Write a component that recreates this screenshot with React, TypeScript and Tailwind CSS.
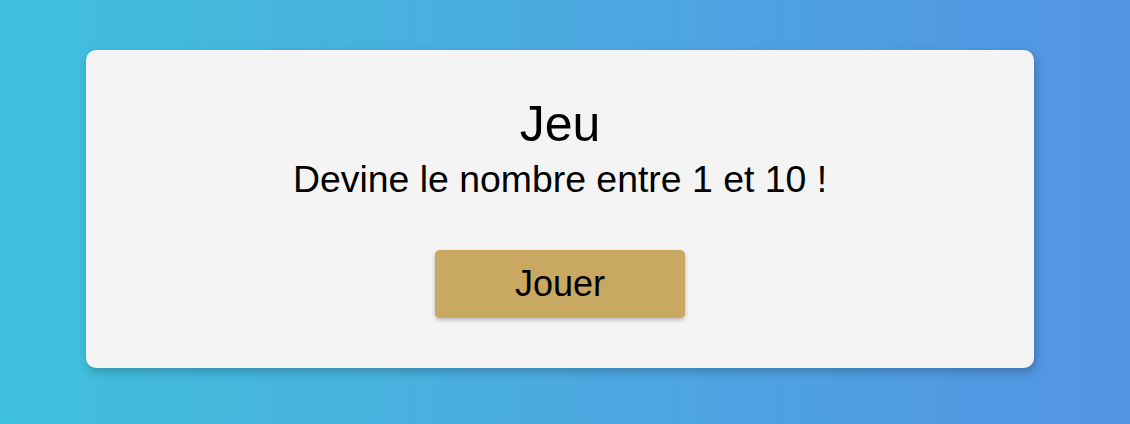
import React from 'react';

const App: React.FC = () => {
  return (
    <div className="w-[1130px] h-[424px] overflow-hidden bg-gradient-to-r from-[#3fc0dc] to-[#5393e3] pt-[50px] pl-[86px] font-['Liberation_Sans',Arial,sans-serif]">
      <div className="w-[948px] h-[318px] bg-[#f4f4f4] rounded-[10px] shadow-[2px_4px_10px_rgba(0,0,0,0.22)] flex flex-col items-center pt-[46px]">
        <h1 className="text-[50px] leading-[57px] text-black">Jeu</h1>
        <p className="text-[37.4px] leading-[41px] text-black mt-[6px]">
          Devine le nombre entre 1 et 10 !
        </p>
        <button className="mt-[50px] w-[250px] h-[68px] bg-[#c9a862] rounded-[5px] shadow-[0_2px_4px_rgba(0,0,0,0.25)] text-[36px] text-black">
          Jouer
        </button>
      </div>
    </div>
  );
};

export default App;
